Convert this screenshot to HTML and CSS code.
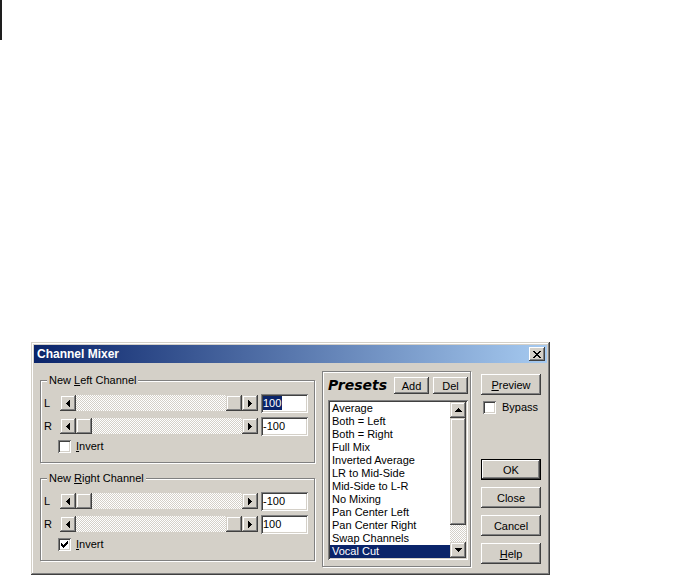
FILE: index.html
```html
<!DOCTYPE html>
<html lang="en">
<head>
    <meta charset="UTF-8">
    <title>Channel Mixer</title>
    <link rel="stylesheet" href="styles.css">
</head>
<body>
    <div class="corner-mark"></div>

    <div class="window">
        <div class="titlebar">
            <span class="title">Channel Mixer</span>
            <span class="caption-btn">
                <svg width="8" height="7" viewBox="0 0 8 7" shape-rendering="crispEdges"><path d="M0 0h2v1H0zM6 0h2v1H6zM1 1h2v1H1zM5 1h2v1H5zM2 2h4v1H2zM3 3h2v1H3zM2 4h4v1H2zM1 5h2v1H1zM5 5h2v1H5zM0 6h2v1H0zM6 6h2v1H6z"/></svg>
            </span>
        </div>

        <div class="dialog-body">
            <!-- левая колонка: два канала -->
            <div class="channels">
                <div class="group">
                    <span class="legend">New <u>L</u>eft Channel</span>
                    <div class="slider-row">
                        <span class="row-label">L</span>
                        <div class="hscroll">
                            <span class="sb-btn"><svg width="4" height="7" viewBox="0 0 4 7" shape-rendering="crispEdges"><path d="M0 3h1v1H0zM1 2h1v3H1zM2 1h1v5H2zM3 0h1v7H3z"/></svg></span>
                            <span class="sb-track end"><span class="sb-thumb"></span></span>
                            <span class="sb-btn"><svg width="4" height="7" viewBox="0 0 4 7" shape-rendering="crispEdges"><path d="M3 3h1v1H3zM2 2h1v3H2zM1 1h1v5H1zM0 0h1v7H0z"/></svg></span>
                        </div>
                        <span class="edit"><span class="sel">100</span></span>
                    </div>
                    <div class="slider-row">
                        <span class="row-label">R</span>
                        <div class="hscroll">
                            <span class="sb-btn"><svg width="4" height="7" viewBox="0 0 4 7" shape-rendering="crispEdges"><path d="M0 3h1v1H0zM1 2h1v3H1zM2 1h1v5H2zM3 0h1v7H3z"/></svg></span>
                            <span class="sb-track"><span class="sb-thumb"></span></span>
                            <span class="sb-btn"><svg width="4" height="7" viewBox="0 0 4 7" shape-rendering="crispEdges"><path d="M3 3h1v1H3zM2 2h1v3H2zM1 1h1v5H1zM0 0h1v7H0z"/></svg></span>
                        </div>
                        <span class="edit">-100</span>
                    </div>
                    <label class="check-row">
                        <span class="checkbox"></span>
                        <span><u>I</u>nvert</span>
                    </label>
                </div>

                <div class="group">
                    <span class="legend">New <u>R</u>ight Channel</span>
                    <div class="slider-row">
                        <span class="row-label">L</span>
                        <div class="hscroll">
                            <span class="sb-btn"><svg width="4" height="7" viewBox="0 0 4 7" shape-rendering="crispEdges"><path d="M0 3h1v1H0zM1 2h1v3H1zM2 1h1v5H2zM3 0h1v7H3z"/></svg></span>
                            <span class="sb-track"><span class="sb-thumb"></span></span>
                            <span class="sb-btn"><svg width="4" height="7" viewBox="0 0 4 7" shape-rendering="crispEdges"><path d="M3 3h1v1H3zM2 2h1v3H2zM1 1h1v5H1zM0 0h1v7H0z"/></svg></span>
                        </div>
                        <span class="edit">-100</span>
                    </div>
                    <div class="slider-row">
                        <span class="row-label">R</span>
                        <div class="hscroll">
                            <span class="sb-btn"><svg width="4" height="7" viewBox="0 0 4 7" shape-rendering="crispEdges"><path d="M0 3h1v1H0zM1 2h1v3H1zM2 1h1v5H2zM3 0h1v7H3z"/></svg></span>
                            <span class="sb-track end"><span class="sb-thumb"></span></span>
                            <span class="sb-btn"><svg width="4" height="7" viewBox="0 0 4 7" shape-rendering="crispEdges"><path d="M3 3h1v1H3zM2 2h1v3H2zM1 1h1v5H1zM0 0h1v7H0z"/></svg></span>
                        </div>
                        <span class="edit">100</span>
                    </div>
                    <label class="check-row">
                        <span class="checkbox checked"><svg width="7" height="7" viewBox="0 0 7 7" shape-rendering="crispEdges"><path d="M6 0h1v1H6zM5 1h2v1H5zM0 2h1v1H0zM4 2h3v1H4zM0 3h2v1H0zM3 3h3v1H3zM0 4h5v1H0zM1 5h3v1H1zM2 6h1v1H2z"/></svg></span>
                        <span><u>I</u>nvert</span>
                    </label>
                </div>
            </div>

            <!-- пресеты -->
            <div class="presets">
                <div class="presets-head">
                    <span class="presets-title">Presets</span>
                    <button class="btn small">Add</button>
                    <button class="btn small">Del</button>
                </div>
                <div class="listbox">
                    <ul class="list-items">
                        <li>Average</li>
                        <li>Both = Left</li>
                        <li>Both = Right</li>
                        <li>Full Mix</li>
                        <li>Inverted Average</li>
                        <li>LR to Mid-Side</li>
                        <li>Mid-Side to L-R</li>
                        <li>No Mixing</li>
                        <li>Pan Center Left</li>
                        <li>Pan Center Right</li>
                        <li>Swap Channels</li>
                        <li class="selected">Vocal Cut</li>
                    </ul>
                    <div class="vscroll">
                        <span class="sb-btn"><svg width="7" height="4" viewBox="0 0 7 4" shape-rendering="crispEdges"><path d="M3 0h1v1H3zM2 1h3v1H2zM1 2h5v1H1zM0 3h7v1H0z"/></svg></span>
                        <span class="sb-thumb tall"></span>
                        <span class="sb-track"></span>
                        <span class="sb-btn"><svg width="7" height="4" viewBox="0 0 7 4" shape-rendering="crispEdges"><path d="M0 0h7v1H0zM1 1h5v1H1zM2 2h3v1H2zM3 3h1v1H3z"/></svg></span>
                    </div>
                </div>
            </div>

            <!-- кнопки справа -->
            <div class="actions">
                <button class="btn"><u>P</u>review</button>
                <label class="check-row bypass">
                    <span class="checkbox"></span>
                    <span>Bypass</span>
                </label>
                <button class="btn default ok">OK</button>
                <button class="btn">Close</button>
                <button class="btn">Cancel</button>
                <button class="btn"><u>H</u>elp</button>
            </div>
        </div>
    </div>
</body>
</html>
```

FILE: styles.css
```css
body {
    margin: 0;
    background: #fff;
    font-family: "Liberation Sans", Arial, sans-serif;
    font-size: 11px;
    color: #000;
}

.corner-mark {
    width: 2px;
    height: 40px;
    background: #1e1e1e;
}

.window {
    box-sizing: border-box;
    width: 519px;
    height: 233px;
    margin: 302px 0 0 31px;
    padding: 3px;
    background: #d4d0c8;
    box-shadow: inset -1px -1px #404040, inset 1px 1px #d4d0c8, inset -2px -2px #808080, inset 2px 2px #fff;
}

.titlebar {
    height: 18px;
    display: flex;
    align-items: center;
    justify-content: space-between;
    padding: 0 2px 0 3px;
    background: linear-gradient(to right, #0a246a, #a6caf0);
}

.title {
    color: #fff;
    font-weight: bold;
    font-size: 12px;
}

.caption-btn {
    width: 16px;
    height: 14px;
    display: flex;
    align-items: center;
    justify-content: center;
    background: #d4d0c8;
    box-shadow: inset -1px -1px #404040, inset 1px 1px #fff, inset -2px -2px #808080;
}

.caption-btn svg {
    margin: 0 0 0 -1px;
}

.dialog-body {
    display: flex;
    align-items: flex-start;
    padding-left: 6px;
}

/* группы каналов */
.channels {
    margin-top: 17px;
}

.group {
    position: relative;
    box-sizing: border-box;
    width: 275px;
    height: 83px;
    padding: 13px 0 0 3px;
    border: 1px solid #808080;
    box-shadow: 1px 1px 0 #fff, inset 1px 1px 0 #fff;
}

.group + .group {
    margin-top: 15px;
}

.legend {
    position: absolute;
    top: -7px;
    left: 6px;
    padding: 0 2px;
    line-height: 13px;
    background: #d4d0c8;
}

.slider-row {
    display: flex;
    align-items: flex-start;
    height: 19px;
    margin-bottom: 4px;
}

.row-label {
    width: 16px;
    line-height: 18px;
}

.hscroll {
    display: flex;
    width: 198px;
    height: 16px;
    margin-top: 1px;
}

.sb-btn {
    flex: none;
    width: 16px;
    height: 16px;
    display: flex;
    align-items: center;
    justify-content: center;
    box-sizing: border-box;
    background: #d4d0c8;
    box-shadow: inset -1px -1px #404040, inset 1px 1px #d4d0c8, inset -2px -2px #808080, inset 2px 2px #fff;
}

.sb-track {
    flex: 1;
    display: flex;
    background: repeating-conic-gradient(#d4d0c8 0% 25%, #fff 0% 50%) 0 0 / 2px 2px;
}

.sb-track.end {
    justify-content: flex-end;
}

.sb-thumb {
    width: 16px;
    height: 16px;
    background: #d4d0c8;
    box-shadow: inset -1px -1px #404040, inset 1px 1px #d4d0c8, inset -2px -2px #808080, inset 2px 2px #fff;
}

.edit {
    box-sizing: border-box;
    width: 47px;
    height: 19px;
    margin-left: 3px;
    padding: 2px 0 0 2px;
    line-height: 14px;
    background: #fff;
    box-shadow: inset 1px 1px #808080, inset -1px -1px #fff, inset 2px 2px #404040, inset -2px -2px #d4d0c8;
}

.sel {
    display: inline-block;
    padding-right: 1px;
    color: #fff;
    background: #0a246a;
}

.check-row {
    display: flex;
    align-items: center;
    gap: 5px;
    margin: 1px 0 0 14px;
    line-height: 13px;
}

.checkbox {
    box-sizing: border-box;
    width: 13px;
    height: 13px;
    display: flex;
    align-items: center;
    justify-content: center;
    background: #fff;
    box-shadow: inset 1px 1px #808080, inset -1px -1px #fff, inset 2px 2px #404040, inset -2px -2px #d4d0c8;
}

/* пресеты */
.presets {
    box-sizing: border-box;
    width: 149px;
    height: 196px;
    margin: 8px 0 0 7px;
    padding: 5px 2px 0 5px;
    border: 1px solid #808080;
    box-shadow: 1px 1px 0 #fff, inset 1px 1px 0 #fff;
}

.presets-head {
    display: flex;
    align-items: center;
    gap: 4px;
    height: 17px;
}

.presets-title {
    flex: 1;
    font-family: "DejaVu Sans", Verdana, sans-serif;
    font-weight: bold;
    font-style: italic;
    font-size: 14px;
    line-height: 17px;
}

.btn {
    box-sizing: border-box;
    width: 60px;
    height: 21px;
    padding: 0;
    border: none;
    font-family: "Liberation Sans", Arial, sans-serif;
    font-size: 11px;
    color: #000;
    background: #d4d0c8;
    box-shadow: inset -1px -1px #404040, inset 1px 1px #fff, inset -2px -2px #808080, inset 2px 2px #d4d0c8;
}

.btn.small {
    width: 35px;
    height: 17px;
}

.btn.default {
    border: 1px solid #000;
}

.listbox {
    box-sizing: border-box;
    display: flex;
    width: 140px;
    height: 160px;
    margin-top: 6px;
    padding: 2px;
    background: #fff;
    box-shadow: inset 1px 1px #808080, inset -1px -1px #fff, inset 2px 2px #404040, inset -2px -2px #d4d0c8;
}

.list-items {
    flex: 1;
    margin: 0;
    padding: 0;
    list-style: none;
}

.list-items li {
    height: 13px;
    padding-left: 2px;
    line-height: 13px;
    white-space: nowrap;
}

.list-items li.selected {
    color: #fff;
    background: #0a246a;
}

.vscroll {
    width: 16px;
    display: flex;
    flex-direction: column;
}

.vscroll .sb-thumb.tall {
    height: 107px;
}

.vscroll .sb-track {
    flex: 1;
}

/* кнопки справа */
.actions {
    display: flex;
    flex-direction: column;
    margin: 11px 0 0 10px;
}

.actions .btn + .btn {
    margin-top: 7px;
}

.bypass {
    margin: 6px 0 0 2px;
    gap: 6px;
}

.actions .ok {
    margin-top: 45px;
}
```
